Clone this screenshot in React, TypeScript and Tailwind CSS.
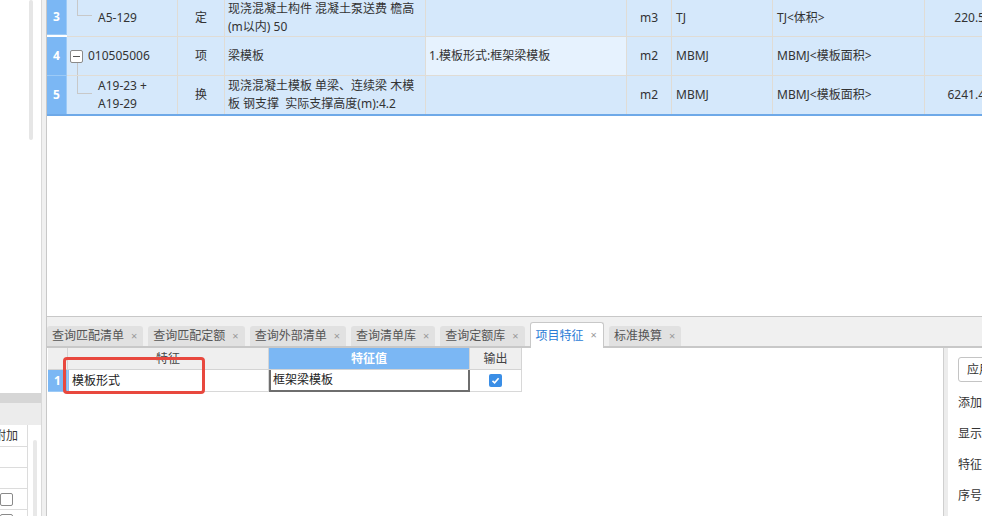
import React from "react"

const font = "font-['Noto_Sans','Noto_Sans_CJK_SC',sans-serif]"

const cell =
  "border-r border-b border-[#e0dcd5] flex items-center text-[12px] leading-[18px] text-[#333] overflow-hidden whitespace-pre bg-[#d5e8fb]"
const numCell =
  "border-r border-b border-[#9ccaf6] flex items-center justify-center text-[12px] font-bold text-white bg-[#7bb7f4]"

const tabs = ["查询匹配清单", "查询匹配定额", "查询外部清单", "查询清单库", "查询定额库", "项目特征", "标准换算"]

function TopTable() {
  return (
    <div className="h-[317px] shrink-0 border-b border-[#c8c8c8] overflow-hidden bg-white">
      <div className="w-[943px] grid grid-cols-[20px_111px_47px_201px_201px_45px_101px_152px_65px]">
        {/* row 3 */}
        <div className={`${numCell} h-[35px]`}>3</div>
        <div className={`${cell} relative pl-[31px]`}>
          <span className="absolute left-[10px] top-0 h-[15px] w-px bg-[#c8c8c8]" />
          <span className="absolute left-[10px] top-[15px] h-px w-[15px] bg-[#c8c8c8]" />
          A5-129
        </div>
        <div className={`${cell} justify-center`}>定</div>
        <div className={`${cell} pl-[3px]`}>
          <div>
            <div>现浇混凝土构件 混凝土泵送费 檐高</div>
            <div>(m以内) 50</div>
          </div>
        </div>
        <div className={cell} />
        <div className={`${cell} justify-center`}>m3</div>
        <div className={`${cell} pl-[4px]`}>TJ</div>
        <div className={`${cell} pl-[4px]`}>TJ&lt;体积&gt;</div>
        <div className={`${cell} justify-end pr-[4px]`}>220.5</div>

        {/* row 4 */}
        <div className={`${numCell} h-[39px]`}>4</div>
        <div className={`${cell} relative pl-[21px]`}>
          <span className="absolute left-[3px] top-[13px] w-[13px] h-[13px] border border-[#8a8a8a] rounded-[2px] bg-white flex items-center justify-center">
            <span className="w-[7px] h-px bg-[#555]" />
          </span>
          <span className="absolute left-[10px] top-[26px] bottom-0 w-px bg-[#c8c8c8]" />
          010505006
        </div>
        <div className={`${cell} justify-center`}>项</div>
        <div className={`${cell} pl-[3px]`}>梁模板</div>
        <div className={`${cell} pl-[3px] !bg-[#e6f2fe]`}>1.模板形式:框架梁模板</div>
        <div className={`${cell} justify-center`}>m2</div>
        <div className={`${cell} pl-[4px]`}>MBMJ</div>
        <div className={`${cell} pl-[4px]`}>MBMJ&lt;模板面积&gt;</div>
        <div className={cell} />

        {/* row 5 */}
        <div className={`${numCell} h-[38px] border-b-0`}>5</div>
        <div className={`${cell} relative pl-[31px] border-b-0`}>
          <span className="absolute left-[10px] top-0 h-[17px] w-px bg-[#c8c8c8]" />
          <span className="absolute left-[10px] top-[17px] h-px w-[15px] bg-[#c8c8c8]" />
          <div>
            <div>A19-23 +</div>
            <div>A19-29</div>
          </div>
        </div>
        <div className={`${cell} justify-center border-b-0`}>换</div>
        <div className={`${cell} pl-[3px] border-b-0`}>
          <div>
            <div>现浇混凝土模板 单梁、连续梁 木模</div>
            <div>板 钢支撑  实际支撑高度(m):4.2</div>
          </div>
        </div>
        <div className={`${cell} border-b-0`} />
        <div className={`${cell} justify-center border-b-0`}>m2</div>
        <div className={`${cell} pl-[4px] border-b-0`}>MBMJ</div>
        <div className={`${cell} pl-[4px] border-b-0`}>MBMJ&lt;模板面积&gt;</div>
        <div className={`${cell} justify-end pr-[4px] border-b-0`}>6241.4</div>
      </div>
      <div className="h-[2px] w-full bg-[#6ea9e8]" />
    </div>
  )
}

function Tabs() {
  return (
    <div className="h-[31px] shrink-0 bg-[#f0f0f0] border-b-2 border-[#c8c8c8] flex items-end gap-[5px]">
      {tabs.map((t, i) =>
        i === 5 ? (
          <div
            key={t}
            className="h-[26px] -mb-[2px] relative bg-white border border-b-0 border-[#c8c8c8] rounded-t-[3px] pl-[5px] pr-[6px] flex items-center text-[12px] text-[#2b7cd6] whitespace-nowrap"
          >
            {t}
            <span className="ml-[7px] text-[11px] text-[#999]">×</span>
          </div>
        ) : (
          <div
            key={t}
            className="h-[20px] bg-[#e1e1e1] rounded-t-[3px] pl-[5px] pr-[6px] flex items-center text-[12px] text-[#555] whitespace-nowrap"
          >
            {t}
            <span className="ml-[7px] text-[11px] text-[#999]">×</span>
          </div>
        )
      )}
    </div>
  )
}

function FeatureTable() {
  const head = "h-[22px] border-r border-b border-[#d4d4d4] flex items-center justify-center text-[12px]"
  return (
    <div className="flex-1 relative bg-white">
      <div className="ml-[1px] w-[474px] grid grid-cols-[20px_201px_201px_52px]">
        <div className={`${head} bg-[#efefef]`} />
        <div className={`${head} bg-[#efefef] text-[#444]`}>特征</div>
        <div className={`${head} bg-[#7bb7f4] text-white font-bold`}>特征值</div>
        <div className={`${head} bg-[#efefef] text-[#444]`}>输出</div>

        <div className="h-[22px] border-r border-b border-[#9ccaf6] bg-[#7bb7f4] flex items-center justify-center text-[12px] font-bold text-white">
          1
        </div>
        <div className="h-[22px] border-r border-b border-[#d8d8d8] border-l border-l-[#8cc0f5] flex items-center pl-[3px] text-[12px] text-[#222]">
          模板形式
        </div>
        <div className="h-[22px] border-x-2 border-b-2 border-[#6e6e6e] flex items-center pl-[2px] text-[12px] text-[#222]">
          框架梁模板
        </div>
        <div className="h-[22px] border-r border-b border-[#d8d8d8] flex items-center justify-center">
          <span className="w-[13px] h-[13px] rounded-[2px] bg-[#3a8ee6] flex items-center justify-center">
            <svg width="9" height="9" viewBox="0 0 9 9">
              <polyline points="1.5,4.8 3.6,6.8 7.6,2.2" fill="none" stroke="white" strokeWidth="1.6" />
            </svg>
          </span>
        </div>
      </div>
      {/* annotation */}
      <div className="absolute left-[16px] top-[9px] w-[142px] h-[37px] border-[3px] border-[#e8483e] rounded-[4px]" />
    </div>
  )
}

function RightPanel() {
  const label = "mt-[15px] h-[16px] leading-[16px] text-[12px] text-[#333] whitespace-nowrap"
  return (
    <div className="w-[34px] shrink-0 pl-[10px] pt-[9px] overflow-hidden bg-white">
      <div className="w-[80px] h-[25px] border border-[#c4c4c4] rounded-[3px] pl-[8px] flex items-center text-[12px] text-[#333] whitespace-nowrap">
        应用规则到所选清单
      </div>
      <div className="mt-[13px] h-[16px] leading-[16px] text-[12px] text-[#333] whitespace-nowrap">添加位置：</div>
      <div className={label}>显示格式：</div>
      <div className={label}>特征描述方式：</div>
      <div className={label}>序号格式：</div>
    </div>
  )
}

function LeftPanel() {
  const row = "h-[21px] border-b border-[#dcdcdc] flex items-center"
  return (
    <div className="w-[42px] shrink-0 border-r border-[#d9d9d9] flex flex-col bg-white">
      <div className="h-[393px] shrink-0">
        <div className="ml-[29px] w-[4px] h-[140px] rounded-full bg-[#e6e6e6]" />
      </div>
      <div className="h-[10px] shrink-0 bg-[#d6d6d6]" />
      <div className="h-[22px] shrink-0 bg-[#ececec]" />
      <div className="flex-1 flex">
        <div className="w-[28px] border-r border-[#dcdcdc] overflow-hidden">
          <div className="h-[22px] border-b border-[#dcdcdc] flex items-center justify-end pr-[9px] text-[12px] text-[#333] whitespace-nowrap">
            附加
          </div>
          <div className={row} />
          <div className={row} />
          <div className={row}>
            <span className="w-[13px] h-[13px] border border-[#8a8a8a] rounded-[2px] bg-white" />
          </div>
          <div className={`${row} items-start pt-[4px]`}>
            <span className="w-[13px] h-[13px] border border-[#8a8a8a] rounded-[2px] bg-white" />
          </div>
        </div>
        <div className="ml-[5px] mt-[15px] w-[4px] rounded-full bg-[#e8e8e8]" />
      </div>
    </div>
  )
}

export default function App() {
  return (
    <div className={`w-[982px] h-[516px] overflow-hidden flex bg-white ${font}`}>
      <LeftPanel />
      <div className="w-[4px] shrink-0 bg-[#f0f0f0]" />
      <div className="flex-1 min-w-0 flex flex-col border-l border-[#c8c8c8]">
        <TopTable />
        <Tabs />
        <div className="flex-1 flex min-h-0">
          <FeatureTable />
          <div className="w-[5px] shrink-0 bg-[#ececec] border-l border-[#cfcfcf]" />
          <RightPanel />
        </div>
      </div>
    </div>
  )
}
